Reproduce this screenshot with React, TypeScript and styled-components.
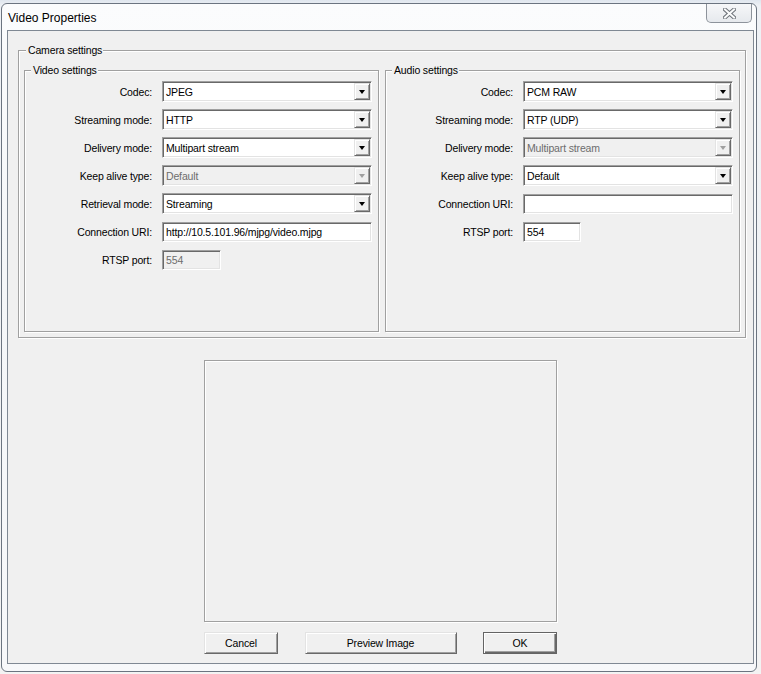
import { FC } from 'react';
import styled, { createGlobalStyle } from 'styled-components';

const GlobalStyle = createGlobalStyle`
  html, body {
    margin: 0;
    padding: 0;
    background: #e9edf2;
  }
  body {
    font-family: "Liberation Sans", Arial, sans-serif;
    font-size: 10.5px;
    letter-spacing: -0.15px;
    color: #000;
  }
`;

const Screen = styled.div`
  width: 761px;
  height: 674px;
  overflow: hidden;
  background: linear-gradient(180deg, #dfe6ee 0%, #eef1f5 6px, #f3f3f3 100%);
`;

// ウィンドウ本体（Win7風のフレーム）
const Window = styled.div`
  box-sizing: border-box;
  margin: 3px 0 0 1px;
  width: 756px;
  height: 669px;
  border: 1px solid #6b7480;
  border-radius: 6px;
  background: linear-gradient(180deg, #fbfcfd 0%, #f4f6f8 40%, #f7f8fa 100%);
  padding: 0 2px 7px 5px;
  display: flex;
  flex-direction: column;
`;

const TitleBar = styled.div`
  height: 26px;
  display: flex;
  justify-content: space-between;
  align-items: flex-start;
`;

const Title = styled.div`
  margin: 7px 0 0 1px;
  font-size: 12px;
  letter-spacing: 0;
  color: #000;
`;

const CloseButton = styled.div`
  box-sizing: border-box;
  width: 46px;
  height: 19px;
  margin-right: 2px;
  border: 1px solid #8d939b;
  border-top: none;
  border-radius: 0 0 5px 5px;
  background: linear-gradient(180deg, #f6f7f9 0%, #e6e9ed 100%);
  display: flex;
  align-items: center;
  justify-content: center;
`;

const Client = styled.div`
  flex: 1;
  box-sizing: border-box;
  border: 1px solid #7f8893;
  background: #f0f0f0;
  display: flex;
  flex-direction: column;
`;

// グループボックス（エッチング枠）
const Group = styled.fieldset<{ $width: number }>`
  box-sizing: border-box;
  width: ${(p) => p.$width}px;
  margin: 0;
  padding: 0;
  border: 1px solid #a0a0a0;
  box-shadow: inset 1px 1px 0 #fff, 1px 1px 0 #fff;
  min-width: 0;
`;

const Legend = styled.legend<{ $indent: number }>`
  margin-left: ${(p) => p.$indent}px;
  padding: 0 1px 0 2px;
  line-height: 13px;
  background: #f0f0f0;
`;

const CameraGroup = styled(Group)`
  margin: 13px 0 0 10px;
  height: 294px;
  padding: 7px 5px 0 5px;
`;

const GroupRow = styled.div`
  display: flex;
  gap: 6px;
`;

const InnerGroup = styled(Group)`
  height: 268px;
`;

const Form = styled.div`
  display: grid;
  grid-template-columns: 127px 210px;
  grid-auto-rows: 21px;
  column-gap: 10px;
  row-gap: 7px;
  align-items: center;
  margin-top: 4px;
`;

const Label = styled.div`
  text-align: right;
  white-space: nowrap;
`;

const Sunken = styled.div<{ $disabled?: boolean; $width?: number; $height: number }>`
  box-sizing: border-box;
  width: ${(p) => (p.$width ? `${p.$width}px` : '100%')};
  height: ${(p) => p.$height}px;
  border: 1px solid;
  border-color: #a0a0a0 #fff #fff #a0a0a0;
  box-shadow: inset 1px 1px 0 #696969, inset -1px -1px 0 #e3e3e3;
  background: ${(p) => (p.$disabled ? '#f0f0f0' : '#fff')};
  color: ${(p) => (p.$disabled ? '#6d6d6d' : '#000')};
  display: flex;
  align-items: center;
  padding: 1px;
`;

const FieldText = styled.span`
  flex: 1;
  padding-left: 2px;
  white-space: nowrap;
  overflow: hidden;
`;

const DropButton = styled.div`
  box-sizing: border-box;
  width: 16px;
  height: 17px;
  border: 1px solid;
  border-color: #e3e3e3 #696969 #696969 #e3e3e3;
  box-shadow: inset 1px 1px 0 #fff, inset -1px -1px 0 #a0a0a0;
  background: #f0f0f0;
  display: flex;
  align-items: center;
  justify-content: center;
`;

const Arrow = styled.div<{ $disabled?: boolean }>`
  width: 0;
  height: 0;
  border-left: 3.5px solid transparent;
  border-right: 3.5px solid transparent;
  border-top: 4px solid ${(p) => (p.$disabled ? '#a0a0a0' : '#000')};
`;

const Preview = styled.div`
  box-sizing: border-box;
  align-self: center;
  width: 353px;
  height: 262px;
  margin-top: 22px;
  border: 1px solid #a0a0a0;
  box-shadow: inset 1px 1px 0 #fff, 1px 1px 0 #fff;
`;

const ButtonBar = styled.div`
  align-self: center;
  width: 353px;
  margin-top: 10px;
  display: flex;
  justify-content: space-between;
`;

const Button = styled.button<{ $width: number; $default?: boolean }>`
  box-sizing: border-box;
  width: ${(p) => p.$width}px;
  height: 22px;
  padding: 0;
  font-family: "Liberation Sans", Arial, sans-serif;
  font-size: 10.5px;
  letter-spacing: -0.15px;
  color: #000;
  background: #f0f0f0;
  border: 1px solid;
  border-color: ${(p) => (p.$default ? '#646464' : '#e3e3e3 #696969 #696969 #e3e3e3')};
  box-shadow: ${(p) =>
    p.$default
      ? 'inset 1px 1px 0 #fff, inset -1px -1px 0 #696969, inset -2px -2px 0 #a0a0a0'
      : 'inset 1px 1px 0 #fff, inset -1px -1px 0 #a0a0a0'};
`;

interface ComboProps {
  value: string;
  disabled?: boolean;
}

const Combo: FC<ComboProps> = ({ value, disabled }) => (
  <Sunken $height={21} $disabled={disabled}>
    <FieldText>{value}</FieldText>
    <DropButton>
      <Arrow $disabled={disabled} />
    </DropButton>
  </Sunken>
);

interface TextProps {
  value: string;
  width?: number;
  disabled?: boolean;
}

const TextBox: FC<TextProps> = ({ value, width, disabled }) => (
  <Sunken $height={20} $width={width} $disabled={disabled}>
    <FieldText>{value}</FieldText>
  </Sunken>
);

const CloseGlyph: FC = () => (
  <svg width="13" height="11" viewBox="0 0 13 11">
    <path d="M2 1.5 L11 9.5 M11 1.5 L2 9.5" stroke="#6e737a" strokeWidth="4" strokeLinecap="square" fill="none" />
    <path d="M2 1.5 L11 9.5 M11 1.5 L2 9.5" stroke="#fafbfc" strokeWidth="2" strokeLinecap="square" fill="none" />
  </svg>
);

export default function App() {
  return (
    <Screen>
      <GlobalStyle />
      <Window>
        <TitleBar>
          <Title>Video Properties</Title>
          <CloseButton>
            <CloseGlyph />
          </CloseButton>
        </TitleBar>
        <Client>
          <CameraGroup $width={728}>
            <Legend $indent={2}>Camera settings</Legend>
            <GroupRow>
              <InnerGroup $width={355}>
                <Legend $indent={6}>Video settings</Legend>
                <Form>
                  <Label>Codec:</Label>
                  <Combo value="JPEG" />
                  <Label>Streaming mode:</Label>
                  <Combo value="HTTP" />
                  <Label>Delivery mode:</Label>
                  <Combo value="Multipart stream" />
                  <Label>Keep alive type:</Label>
                  <Combo value="Default" disabled />
                  <Label>Retrieval mode:</Label>
                  <Combo value="Streaming" />
                  <Label>Connection URI:</Label>
                  <TextBox value="http://10.5.101.96/mjpg/video.mjpg" />
                  <Label>RTSP port:</Label>
                  <TextBox value="554" width={59} disabled />
                </Form>
              </InnerGroup>
              <InnerGroup $width={355}>
                <Legend $indent={6}>Audio settings</Legend>
                <Form>
                  <Label>Codec:</Label>
                  <Combo value="PCM RAW" />
                  <Label>Streaming mode:</Label>
                  <Combo value="RTP (UDP)" />
                  <Label>Delivery mode:</Label>
                  <Combo value="Multipart stream" disabled />
                  <Label>Keep alive type:</Label>
                  <Combo value="Default" />
                  <Label>Connection URI:</Label>
                  <TextBox value="" />
                  <Label>RTSP port:</Label>
                  <TextBox value="554" width={58} />
                </Form>
              </InnerGroup>
            </GroupRow>
          </CameraGroup>
          <Preview />
          <ButtonBar>
            <Button $width={74}>Cancel</Button>
            <Button $width={152}>Preview Image</Button>
            <Button $width={74} $default>
              OK
            </Button>
          </ButtonBar>
        </Client>
      </Window>
    </Screen>
  );
}
